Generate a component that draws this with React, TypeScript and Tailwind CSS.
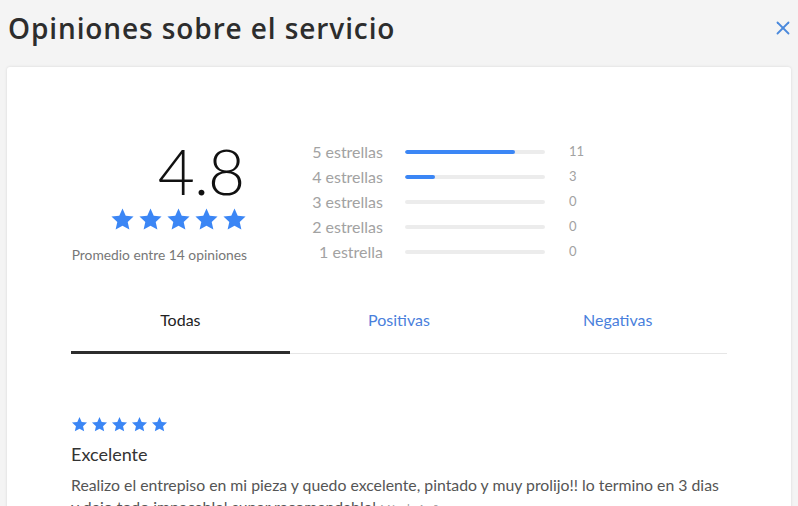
import { X } from "lucide-react";

const rows = [
  { label: "5 estrellas", count: 11 },
  { label: "4 estrellas", count: 3 },
  { label: "3 estrellas", count: 0 },
  { label: "2 estrellas", count: 0 },
  { label: "1 estrella", count: 0 },
];

function Star({ size }: { size: number }) {
  return (
    <svg width={size} height={size} viewBox="0 0 24 24" fill="#3b86f5">
      <path d="M12 1.5l3.1 6.9 7.5.8-5.6 5.1 1.6 7.4L12 17.9l-6.6 3.8 1.6-7.4-5.6-5.1 7.5-.8z" />
    </svg>
  );
}

export default function App() {
  return (
    <div className="min-h-[506px] bg-[#f4f4f4] font-['Lato',sans-serif] overflow-hidden">
      <div className="flex items-center justify-between h-[67px] pl-2 pr-[4px]">
        <h1 className="text-[28px] font-semibold text-[#2d2d2d] font-['Open_Sans',sans-serif] tracking-[0.9px] -mt-[12px]">
          Opiniones sobre el servicio
        </h1>
        <button className="text-[#4a89dc] -mt-[11px]">
          <X size={22} strokeWidth={2} />
        </button>
      </div>
      <div className="mx-[7px] bg-white rounded-[3px] shadow-[0_0_3px_rgba(0,0,0,0.12)] px-16 pt-[72px] pb-10 min-h-[460px]">
        <div className="flex">
          <div className="w-[176px] flex flex-col items-end">
            <div className="text-[64px] font-light leading-none text-[#111] mr-[3px] tracking-[-1px]">4.8</div>
            <div className="flex gap-[3px] mt-[4px]">
              {[0, 1, 2, 3, 4].map((i) => (
                <Star key={i} size={25} />
              ))}
            </div>
            <div className="text-[13.8px] text-[#777] mt-[13px] whitespace-nowrap">
              Promedio entre 14 opiniones
            </div>
          </div>
          <div className="ml-[64px] flex flex-col">
            {rows.map((r) => (
              <div key={r.label} className="flex items-center h-[25px]">
                <div className="w-[72px] text-right text-[16px] text-[#a2a2a2] whitespace-nowrap">{r.label}</div>
                <div className="ml-[22px] w-[140px] h-[4px] rounded-full bg-[#ececec] overflow-hidden">
                  <div className="h-full rounded-full bg-[#3b86f5]" style={{ width: `${(r.count / 14) * 100}%` }} />
                </div>
                <div className="ml-[24px] text-[13px] text-[#a2a2a2]">{r.count}</div>
              </div>
            ))}
          </div>
        </div>
        <div className="mt-[42px] flex border-b border-[#e6e6e6]">
          <div className="flex-1 text-center text-[16px] text-[#222] pb-[19px] border-b-[3px] border-[#2d2d2d] -mb-px">Todas</div>
          <div className="flex-1 text-center text-[16px] text-[#4a7fdc] pb-[19px]">Positivas</div>
          <div className="flex-1 text-center text-[16px] text-[#4a7fdc] pb-[19px]">Negativas</div>
        </div>
        <div className="mt-[62px]">
          <div className="flex gap-[3px]">
            {[0, 1, 2, 3, 4].map((i) => (
              <Star key={i} size={17} />
            ))}
          </div>
          <div className="mt-[8px] text-[18px] text-[#333]">Excelente</div>
          <p className="mt-[6px] text-[15.8px] leading-[22px] text-[#555]">
            Realizo el entrepiso en mi pieza y quedo excelente, pintado y muy prolijo!! lo termino en 3 dias y dejo todo impecable! super recomendable!{" "}
            <span className="text-[11px] text-[#999]">Más de 1 año</span>
          </p>
        </div>
      </div>
    </div>
  );
}
